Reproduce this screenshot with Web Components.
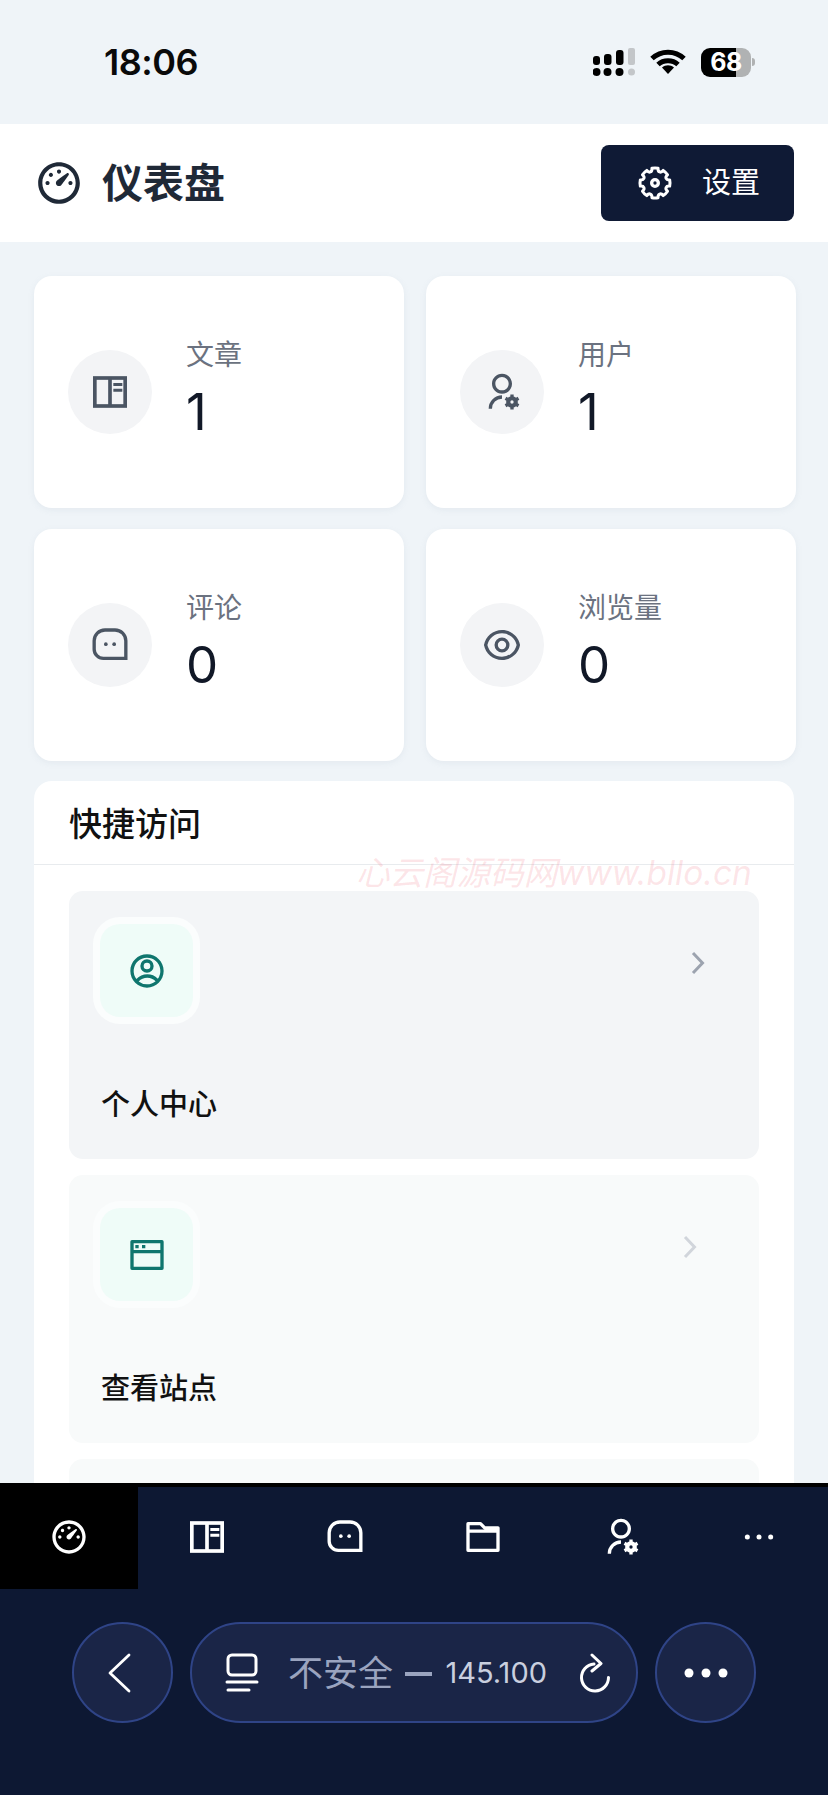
<!DOCTYPE html>
<html lang="zh">
<head>
<meta charset="utf-8">
<title>仪表盘</title>
<style>
html, body { margin: 0; height: 1795px; overflow: hidden; }
body {
    display: flex;
    flex-direction: column;
    background: #eff4f8;
    font-family: Inter, "Noto Sans CJK SC", sans-serif;
}
</style>
</head>
<body>
<status-bar></status-bar>
<page-header title-text="仪表盘">设置</page-header>
<page-main>
    <stat-grid>
        <stat-card icon="book"><span slot="label">文章</span>1</stat-card>
        <stat-card icon="user-gear"><span slot="label">用户</span>1</stat-card>
        <stat-card icon="chat"><span slot="label">评论</span>0</stat-card>
        <stat-card icon="eye"><span slot="label">浏览量</span>0</stat-card>
    </stat-grid>
    <quick-card title-text="快捷访问">
        <quick-item icon="account" active>个人中心</quick-item>
        <quick-item icon="window">查看站点</quick-item>
        <quick-item></quick-item>
    </quick-card>
</page-main>
<tab-bar></tab-bar>
<browser-bar></browser-bar>

<script>
const FONT_CJK = 'Inter, "Noto Sans CJK SC", sans-serif'

// all icons on a 24 unit box, size comes from the attribute
const ICONS = {
    dashboard: '<path fill="currentColor" d="M12 2c5.523 0 10 4.477 10 10s-4.477 10-10 10S2 17.523 2 12 6.477 2 12 2zm0 2c-4.418 0-8 3.582-8 8s3.582 8 8 8 8-3.582 8-8-3.582-8-8-8zm3.833 3.337c.237-.166.559-.138.763.066.204.204.23.526.063.76-2.18 3.046-3.38 4.678-3.598 4.897-.586.585-1.536.585-2.122 0-.585-.586-.585-1.536 0-2.122.374-.373 2.005-1.574 4.894-3.6zM17.5 11c.552 0 1 .448 1 1s-.448 1-1 1-1-.448-1-1 .448-1 1-1zm-11 0c.552 0 1 .448 1 1s-.448 1-1 1-1-.448-1-1 .448-1 1-1zm2.318-3.596c.39.39.39 1.023 0 1.414-.39.39-1.024.39-1.414 0-.39-.39-.39-1.024 0-1.414.39-.39 1.023-.39 1.414 0zM12 5.5c.552 0 1 .448 1 1s-.448 1-1 1-1-.448-1-1 .448-1 1-1z"/>',
    gear: '<g fill="none" stroke="currentColor" stroke-width="2" stroke-linejoin="round"><path transform="translate(1.2 1.2) scale(.9)" d="M2.213 14.06a9.945 9.945 0 0 1 0-4.12c1.11.13 2.08-.237 2.396-1.001.317-.765-.108-1.71-.986-2.403a9.945 9.945 0 0 1 2.913-2.913c.692.877 1.638 1.303 2.403.986.765-.317 1.132-1.286 1.001-2.396a9.945 9.945 0 0 1 4.12 0c-.13 1.11.237 2.08 1.001 2.396.765.317 1.71-.108 2.403-.986a9.945 9.945 0 0 1 2.913 2.913c-.877.692-1.303 1.638-.986 2.403.317.765 1.286 1.132 2.396 1.001a9.945 9.945 0 0 1 0 4.12c-1.11-.13-2.08.237-2.396 1.001-.317.765.108 1.71.986 2.403a9.945 9.945 0 0 1-2.913 2.913c-.692-.877-1.638-1.303-2.403-.986-.765.317-1.132 1.286-1.001 2.396a9.945 9.945 0 0 1-4.12 0c.13-1.11-.237-2.08-1.001-2.396-.765-.317-1.71.108-2.403.986a9.945 9.945 0 0 1-2.913-2.913c.877-.692 1.303-1.638.986-2.403-.317-.765-1.286-1.132-2.396-1.001z"/><circle cx="12" cy="12" r="2"/></g>',
    book: '<g fill="none" stroke="currentColor" stroke-width="2.200"><rect x="2.900" y="3.600" width="18.200" height="16.800"/><path d="M12 3.500v17"/></g><path fill="currentColor" d="M14 6.600h5.400v1.800H14zM14 10h5.400v1.800H14z"/>',
    'user-gear': '<path fill="currentColor" d="M12 14v2a6 6 0 0 0-6 6H4a8 8 0 0 1 8-8zm0-1c-3.315 0-6-2.685-6-6s2.685-6 6-6 6 2.685 6 6-2.685 6-6 6zm0-2c2.21 0 4-1.79 4-4s-1.79-4-4-4-4 1.79-4 4 1.79 4 4 4zm2.595 7.812a3.51 3.51 0 0 1 0-1.623l-.992-.573 1-1.732.992.573A3.496 3.496 0 0 1 17 14.645V13.5h2v1.145c.532.158 1.012.44 1.405.812l.992-.573 1 1.732-.992.573a3.51 3.51 0 0 1 0 1.622l.992.573-1 1.732-.992-.573a3.496 3.496 0 0 1-1.405.812V22.5h-2v-1.145a3.496 3.496 0 0 1-1.405-.812l-.992.573-1-1.732.992-.572zM18 17a1 1 0 1 0 0 2 1 1 0 0 0 0-2z"/>',
    chat: '<path fill="none" stroke="currentColor" stroke-width="2" d="M9 3h6a6.500 6.500 0 0 1 6.500 6.500V20H8A5.500 5.500 0 0 1 2.500 14.500v-5A6.500 6.500 0 0 1 9 3z"/><circle fill="currentColor" cx="9.500" cy="11.500" r="1.100"/><circle fill="currentColor" cx="14.500" cy="11.500" r="1.100"/>',
    eye: '<path fill="currentColor" d="M12 3c5.392 0 9.878 3.88 10.819 9-.94 5.12-5.427 9-10.819 9-5.392 0-9.878-3.88-10.819-9C2.121 6.88 6.608 3 12 3zm0 16a9.005 9.005 0 0 0 8.777-7 9.005 9.005 0 0 0-17.554 0A9.005 9.005 0 0 0 12 19zm0-2.500a4.500 4.500 0 1 1 0-9 4.500 4.500 0 0 1 0 9zm0-2a2.500 2.500 0 1 0 0-5 2.500 2.500 0 0 0 0 5z"/>',
    folder: '<path fill="none" stroke="currentColor" stroke-width="2" stroke-linejoin="round" d="M3 4h7.500l2.500 2.500h8V20H3zM3 8.500h18"/>',
    account: '<path fill="currentColor" d="M12 22C6.477 22 2 17.523 2 12S6.477 2 12 2s10 4.477 10 10-4.477 10-10 10zm-4.987-3.744A7.966 7.966 0 0 0 12 20c1.970 0 3.773-.712 5.167-1.892A6.979 6.979 0 0 0 12.160 16a6.981 6.981 0 0 0-5.147 2.256zM5.616 16.820A8.975 8.975 0 0 1 12.160 14a8.972 8.972 0 0 1 6.362 2.634 8 8 0 1 0-12.906.187zM12 13a4 4 0 1 1 0-8 4 4 0 0 1 0 8zm0-2a2 2 0 1 0 0-4 2 2 0 0 0 0 4z"/>',
    window: '<path fill="currentColor" d="M3 3h18a1 1 0 0 1 1 1v16a1 1 0 0 1-1 1H3a1 1 0 0 1-1-1V4a1 1 0 0 1 1-1zm17 8H4v8h16v-8zm0-2V5H4v4h16zM9 6h2v2H9V6zM5 6h2v2H5V6z"/>',
    dots: '<circle fill="currentColor" cx="5" cy="12" r="1.500"/><circle fill="currentColor" cx="12" cy="12" r="1.500"/><circle fill="currentColor" cx="19" cy="12" r="1.500"/>'
}

class XIcon extends HTMLElement {
    connectedCallback() {
        let size = this.getAttribute("size") || 40
        this.attachShadow({mode: "open"})
        this.shadowRoot.innerHTML = `<style>
            :host { display: block; width: ${size}px; height: ${size}px; flex: none; }
            svg { display: block; width: 100%; height: 100%; }
        </style><svg viewBox="0 0 24 24">${ICONS[this.getAttribute("name")] || ""}</svg>`
    }
}
customElements.define("x-icon", XIcon)

class StatusBar extends HTMLElement {
    constructor() {
        super()
        this.attachShadow({mode: "open"})
        this.shadowRoot.innerHTML = `<style>
            :host { display: flex; align-items: center; height: 124px; box-sizing: border-box; padding: 0 73px 0 104px; background: #eff4f8; color: #0a0a0a; flex: none; }
            .time { font: 600 36px/40px Inter, sans-serif; letter-spacing: -.5px; flex: 1; }
            .signal { width: 42px; height: 28px; margin-right: 15px; }
            .wifi { width: 36px; height: 27px; margin: 0 15px 3px 0; }
            .battery { display: flex; align-items: center; justify-content: center; width: 50px; height: 29px; border-radius: 9px; background: linear-gradient(90deg, #000 70%, #b0b2b3 70%); color: #fff; font: 700 25px/29px Inter, sans-serif; letter-spacing: -.5px; }
            .tip { width: 3px; height: 8px; margin-left: 1px; border-radius: 0 3px 3px 0; background: #b0b2b3; }
        </style>
        <div class="time">18:06</div>
        <svg class="signal" viewBox="0 0 42 28">
            <g fill="#000">
                <rect x="0" y="8" width="7" height="9" rx="3"/><rect x="11" y="6" width="7.500" height="11" rx="3"/><rect x="23" y="2" width="7.500" height="15" rx="3"/>
                <circle cx="3.500" cy="24" r="4"/><circle cx="14.500" cy="24" r="4"/><circle cx="26.500" cy="24" r="4"/>
            </g>
            <g fill="#c3c6c9"><rect x="35" y="0" width="7" height="17" rx="2"/><circle cx="38.500" cy="24" r="3.500"/></g>
        </svg>
        <svg class="wifi" viewBox="0 0 36 27">
            <g fill="none" stroke="#000" stroke-width="5">
                <path d="M2 11.500C11 3 25 3 34 11.500"/><path d="M8 17.500c5.500-5 14.500-5 20 0"/>
            </g>
            <path fill="#000" d="M18 27l-6-6.500c3.500-3 8.500-3 12 0z"/>
        </svg>
        <div class="battery">68</div><div class="tip"></div>`
    }
}
customElements.define("status-bar", StatusBar)

class PageHeader extends HTMLElement {
    constructor() {
        super()
        this.attachShadow({mode: "open"})
        this.shadowRoot.innerHTML = `<style>
            :host { display: flex; align-items: center; height: 118px; box-sizing: border-box; padding: 0 34px 0 34px; background: #fff; color: #1f2937; flex: none; font-family: ${FONT_CJK}; }
            h1 { margin: 0 0 0 18px; flex: 1; font-size: 41px; line-height: 50px; font-weight: 700; }
            button { display: flex; align-items: center; width: 193px; height: 76px; padding: 0 0 0 34px; box-sizing: border-box; border: 0; border-radius: 8px; background: #0f1a35; color: #fff; font: 400 29px/36px ${FONT_CJK}; }
            span { margin-left: 27px; }
        </style>
        <x-icon name="dashboard" size="50"></x-icon>
        <h1></h1>
        <button><x-icon name="gear" size="40"></x-icon><span><slot></slot></span></button>`
    }
    connectedCallback() {
        this.shadowRoot.querySelector("h1").textContent = this.getAttribute("title-text")
    }
}
customElements.define("page-header", PageHeader)

class PageMain extends HTMLElement {
    constructor() {
        super()
        this.attachShadow({mode: "open"})
        this.shadowRoot.innerHTML = `<style>
            :host { display: flex; flex-direction: column; gap: 20px; flex: 1 1 0; min-height: 0; overflow: hidden; padding: 34px 32px 0 34px; }
        </style><slot></slot>`
    }
}
customElements.define("page-main", PageMain)

class StatGrid extends HTMLElement {
    constructor() {
        super()
        this.attachShadow({mode: "open"})
        this.shadowRoot.innerHTML = `<style>
            :host { display: grid; grid-template-columns: 370px 370px; grid-auto-rows: 232px; column-gap: 22px; row-gap: 21px; flex: none; }
        </style><slot></slot>`
    }
}
customElements.define("stat-grid", StatGrid)

class StatCard extends HTMLElement {
    constructor() {
        super()
        this.attachShadow({mode: "open"})
        this.shadowRoot.innerHTML = `<style>
            :host { display: flex; align-items: center; gap: 34px; padding-left: 34px; background: #fff; border-radius: 18px; box-shadow: 0 2px 6px rgba(148,163,184,.12); }
            .circle { display: flex; align-items: center; justify-content: center; width: 84px; height: 84px; border-radius: 50%; background: #f3f4f6; color: #4b5563; }
            .text { padding-bottom: 8px; }
            .label { font: 400 28px/40px ${FONT_CJK}; color: #6b7280; }
            .value { font: 400 51px/60px Inter, sans-serif; margin-top: 7px; color: #111827; }
        </style>
        <div class="circle"></div>
        <div class="text">
            <div class="label"><slot name="label"></slot></div>
            <div class="value"><slot></slot></div>
        </div>`
    }
    connectedCallback() {
        this.shadowRoot.querySelector(".circle").innerHTML = `<x-icon name="${this.getAttribute("icon")}"></x-icon>`
    }
}
customElements.define("stat-card", StatCard)

class QuickCard extends HTMLElement {
    constructor() {
        super()
        this.attachShadow({mode: "open"})
        this.shadowRoot.innerHTML = `<style>
            :host { display: block; position: relative; margin-right: 2px; background: #fff; border-radius: 18px 18px 0 0; flex: none; }
            header { height: 84px; box-sizing: border-box; padding: 20px 35px 0; border-bottom: 1px solid #e8ebee; font: 500 33px/46px ${FONT_CJK}; color: #111; }
            .body { display: flex; flex-direction: column; gap: 16px; padding: 26px 35px 0; }
            .mark { position: absolute; left: 322px; top: 72px; font: italic 400 33.500px/40px ${FONT_CJK}; white-space: nowrap; color: rgba(240,90,110,.16); }
        </style>
        <header></header>
        <div class="mark">心云阁源码网www.bllo.cn</div>
        <div class="body"><slot></slot></div>`
    }
    connectedCallback() {
        this.shadowRoot.querySelector("header").textContent = this.getAttribute("title-text")
    }
}
customElements.define("quick-card", QuickCard)

class QuickItem extends HTMLElement {
    constructor() {
        super()
        this.attachShadow({mode: "open"})
        this.shadowRoot.innerHTML = `<style>
            :host { display: block; height: 268px; box-sizing: border-box; padding: 33px 0 0 31px; background: #f8fafa; border-radius: 14px; color: #111; }
            :host([active]) { background: #f3f5f7; }
            .top { display: flex; justify-content: space-between; padding-right: 62px; }
            :host([active]) .top { padding-right: 54px; }
            .box { display: flex; align-items: center; justify-content: center; width: 93px; height: 93px; border-radius: 20px; background: #effcf8; color: #0f766e; box-shadow: 0 0 0 7px #fbfdfd; }
            svg { display: block; width: 14px; height: 24px; margin-top: 27px; color: #d1d5db; }
            :host([active]) svg { color: #9ca3af; }
            .name { margin: 68px 0 0 1px; font: 500 29px/40px ${FONT_CJK}; }
        </style>
        <div class="top">
            <div class="box"></div>
            <svg viewBox="0 0 14 24"><path fill="none" stroke="currentColor" stroke-width="3" d="M2 2l9.500 10L2 22"/></svg>
        </div>
        <div class="name"><slot></slot></div>`
    }
    connectedCallback() {
        let icon = this.getAttribute("icon")
        if (icon) this.shadowRoot.querySelector(".box").innerHTML = `<x-icon name="${icon}"></x-icon>`
    }
}
customElements.define("quick-item", QuickItem)

class TabBar extends HTMLElement {
    constructor() {
        super()
        this.attachShadow({mode: "open"})
        let names = ["dashboard", "book", "chat", "folder", "user-gear", "dots"]
        this.shadowRoot.innerHTML = `<style>
            :host { display: flex; height: 106px; box-sizing: border-box; border-top: 4px solid #000; background: #0d1833; color: #fff; flex: none; }
            div { display: flex; flex: 1; align-items: center; justify-content: center; padding-bottom: 2px; }
            div.on { background: #000; }
        </style>` + names.map((n, i) => `<div class="${i == 0 ? "on" : ""}"><x-icon name="${n}"></x-icon></div>`).join("")
    }
}
customElements.define("tab-bar", TabBar)

class BrowserBar extends HTMLElement {
    constructor() {
        super()
        this.attachShadow({mode: "open"})
        this.shadowRoot.innerHTML = `<style>
            :host { display: flex; align-items: flex-start; gap: 17px; flex: none; height: 206px; box-sizing: border-box; padding: 33px 0 0 72px; background: #0d1833; color: #fff; }
            .round, .pill { height: 101px; box-sizing: border-box; display: flex; align-items: center; background: #1a2547; border: 2px solid #2f4487; border-radius: 51px; }
            .round { width: 101px; justify-content: center; }
            .back { margin-right: 7px; }
            .pill { width: 448px; padding-left: 33px; }
            .addr { margin-left: 29px; width: 259px; display: flex; align-items: center; white-space: nowrap; font: 400 35px/44px ${FONT_CJK}; color: #9aa4bf; }
            .dash { width: 29px; height: 4px; margin: 2px 13px 0 12px; background: #9aa4bf; }
            .ip { font: 400 29px/44px Inter, sans-serif; color: #c9cfdf; }
            .reload { margin-left: 32px; }
            .list { width: 34px; height: 40px; }
        </style>
        <div class="round">
            <svg class="back" width="24" height="40" viewBox="0 0 24 40"><path fill="none" stroke="currentColor" stroke-width="2.800" stroke-linecap="round" stroke-linejoin="round" d="M22 2L3 20l19 18"/></svg>
        </div>
        <div class="pill">
            <svg class="list" viewBox="0 0 34 40" fill="none" stroke="currentColor" stroke-width="3"><rect x="3" y="2" width="28" height="20" rx="4"/><path stroke-linecap="round" d="M2 29h30M3 37h21"/></svg>
            <div class="addr">不安全<span class="dash"></span><span class="ip">145.100</span></div>
            <svg class="reload" width="32" height="40" viewBox="0 0 32 40" fill="none" stroke="currentColor" stroke-width="3" stroke-linecap="round" stroke-linejoin="round"><path d="M15 11A13.500 13.500 0 1 0 29.500 24.500"/><path d="M13 2l9 8.500-9 7.500"/></svg>
        </div>
        <div class="round">
            <svg width="46" height="12" viewBox="0 0 46 12" fill="currentColor"><circle cx="6" cy="6" r="4.500"/><circle cx="23" cy="6" r="4.500"/><circle cx="40" cy="6" r="4.500"/></svg>
        </div>`
    }
}
customElements.define("browser-bar", BrowserBar)
</script>
</body>
</html>
